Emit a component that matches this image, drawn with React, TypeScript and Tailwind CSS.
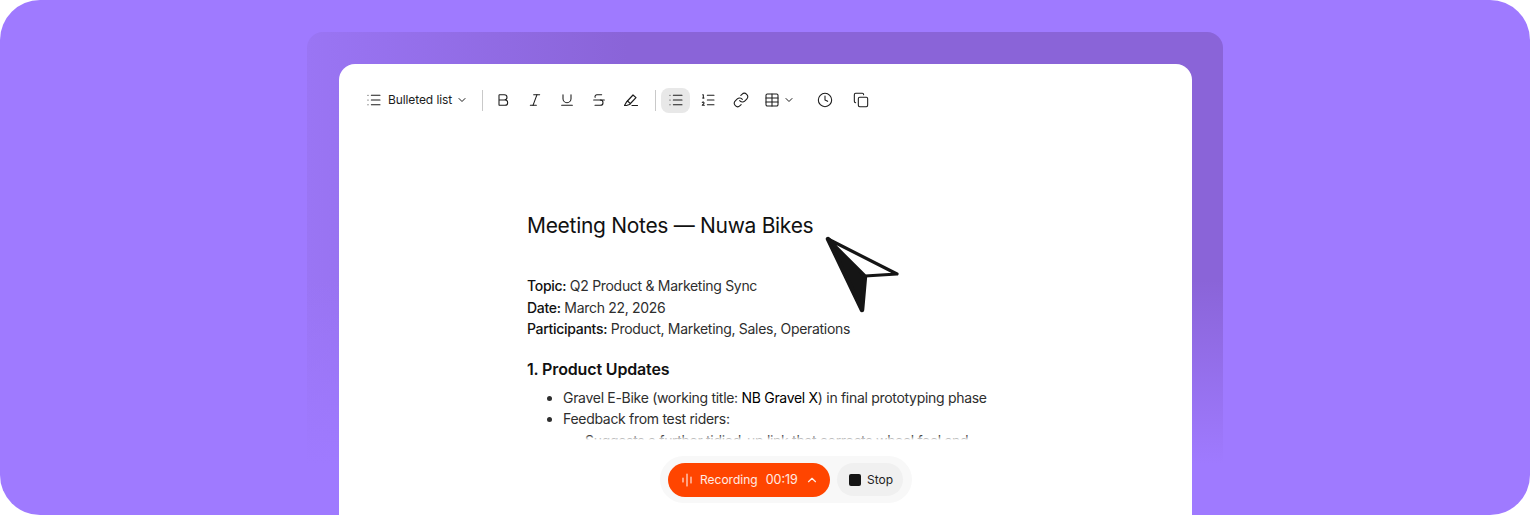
import React from "react";
import { List, Bold, Italic, Underline, Strikethrough, ListOrdered, Link, Table, Clock, Copy, ChevronDown, ChevronUp } from "lucide-react";

const Ico = "w-4 h-4 text-[#1c1c1c]";
function Btn({ children, w = "w-8" }: { children: React.ReactNode; w?: string }) {
  return <div className={`${w} h-[26px] flex items-center justify-center shrink-0`}>{children}</div>;
}
function Highlight() {
  return (
    <svg viewBox="0 0 16 16" className="w-[16px] h-[16px]" fill="none" stroke="#1c1c1c" strokeWidth="1.2" strokeLinecap="round" strokeLinejoin="round">
      <path d="M9 13.5h5.5" />
      <path d="M1.5 13.5 L3.5 10 L10 3 l3 2.6 L6.5 12.5 L3.5 13.5 z" />
      <path d="M4.5 9 l3 2.6" />
    </svg>
  );
}
export default function App() {
  return (
    <div className="bg-white h-[517px] overflow-hidden font-['Inter',sans-serif]">
      <div className="relative h-[515px] rounded-[40px] bg-[#9f7aff] overflow-hidden pt-8 flex justify-center">
        <div className="w-[916px] h-[450px] rounded-t-[16px] bg-[linear-gradient(to_bottom,rgba(159,122,255,0)_55%,#9f7aff_96%),linear-gradient(to_right,#9a75f4_0%,#8a64d8_35%,#8a64d8_100%)]" />
        <div className="absolute top-16 left-[339px] w-[853px] h-[460px] bg-white rounded-t-[16px] overflow-hidden">
          <div className="flex items-center pl-[27px] pt-[23px] h-[49px] text-[#1c1c1c]">
            <List className={Ico} strokeWidth={1.6} />
            <span className="ml-[6px] text-[12px] leading-none tracking-[-0.1px]">Bulleted list</span>
            <ChevronDown className="ml-[4px] w-3 h-3" strokeWidth={2} />
            <div className="ml-[14px] mr-[4px] w-[1px] h-[21px] bg-[#c9c9c9]" />
            <Btn><Bold className={Ico} strokeWidth={1.6} /></Btn>
            <Btn><Italic className={Ico} strokeWidth={1.6} /></Btn>
            <Btn><Underline className={Ico} strokeWidth={1.6} /></Btn>
            <Btn><Strikethrough className={Ico} strokeWidth={1.6} /></Btn>
            <Btn><Highlight /></Btn>
            <div className="ml-[8px] mr-[5px] w-[1px] h-[21px] bg-[#c9c9c9]" />
            <div className="w-[29px] h-[25px] rounded-[8px] bg-[#e8e8e8] flex items-center justify-center"><List className={Ico} strokeWidth={1.6} /></div>
            <Btn w="w-[36px]"><ListOrdered className={Ico} strokeWidth={1.6} /></Btn>
            <Btn w="w-[30px]"><Link className={Ico} strokeWidth={1.6} /></Btn>
            <Btn w="w-[46px]"><span className="flex items-center gap-[3px]"><Table className={Ico} strokeWidth={1.6} /><ChevronDown className="w-3 h-3" strokeWidth={2} /></span></Btn>
            <Btn w="w-[46px]"><Clock className={Ico} strokeWidth={1.6} /></Btn>
            <Btn w="w-[26px]"><Copy className={Ico} strokeWidth={1.6} /></Btn>
          </div>
          <div className="ml-[188px] mt-[99px] w-[520px] text-[#2e2e2e] text-[14px] leading-[21.5px] tracking-[-0.3px]">
            <h1 className="text-[21px] leading-[28px] text-[#111] tracking-[-0.3px]">Meeting Notes — Nuwa Bikes</h1>
            <p className="mt-[35px]"><span className="font-medium text-[#111]">Topic:</span> Q2 Product &amp; Marketing Sync</p>
            <p><span className="font-medium text-[#111]">Date:</span> March 22, 2026</p>
            <p><span className="font-medium text-[#111]">Participants:</span> Product, Marketing, Sales, Operations</p>
            <h2 className="mt-[17px] text-[16px] leading-[24px] font-semibold text-[#111] tracking-[-0.15px]">1. Product Updates</h2>
            <ul className="mt-[6px] ml-[36px] list-disc">
              <li>Gravel E-Bike (working title: <span className="text-[#000]">NB Gravel X</span>) in final prototyping phase</li>
              <li>Feedback from test riders:</li>
              <ul className="ml-[22px] list-none">
                <li>Suggests a further tidied-up link that corrects wheel feel and</li>
              </ul>
            </ul>
          </div>
          <div className="absolute left-0 right-0 top-[371px] h-[5px] bg-gradient-to-b from-white/0 to-white" />
          <div className="absolute left-0 right-0 top-[376px] h-[100px] bg-white" />
        </div>
        <div className="absolute top-[456px] left-[660px] w-[252px] h-[47px] rounded-full bg-[#f8f8f8] flex items-center pl-2 pr-[9px] gap-[7px]">
          <div className="w-[162px] h-[34px] rounded-full bg-[#ff4500] text-white/90 flex items-center pl-[13px] text-[12px] leading-none">
            <svg viewBox="0 0 12 14" className="w-[12px] h-[14px]" fill="none" stroke="#ffffff" strokeOpacity="0.85" strokeWidth="1.2" strokeLinecap="round">
              <path d="M2 5v4M6 1v12M10 4v6" />
            </svg>
            <span className="ml-[7px]">Recording</span>
            <span className="ml-[8px] mt-[1px] text-[12.5px]">00:19</span>
            <ChevronUp className="ml-[7px] w-[14px] h-[14px]" strokeWidth={2} />
          </div>
          <div className="w-[66px] h-[33px] rounded-full bg-[#f0f0f0] flex items-center pl-[12px] text-[12px] text-[#222]">
            <div className="w-[12px] h-[12px] rounded-[2px] bg-[#151515]" />
            <span className="ml-[6px]">Stop</span>
          </div>
        </div>
        <svg className="absolute left-[824px] top-[235px] w-[78px] h-[80px]" viewBox="0 0 78 80" fill="none">
          <path d="M4 4 L41 41 L38 75 Z" fill="#151515" stroke="#151515" strokeWidth="4.5" strokeLinejoin="round" />
          <path d="M4 4 L73 39 L41 41 Z" fill="#fff" stroke="#151515" strokeWidth="3.2" strokeLinejoin="round" />
        </svg>
      </div>
    </div>
  );
}
